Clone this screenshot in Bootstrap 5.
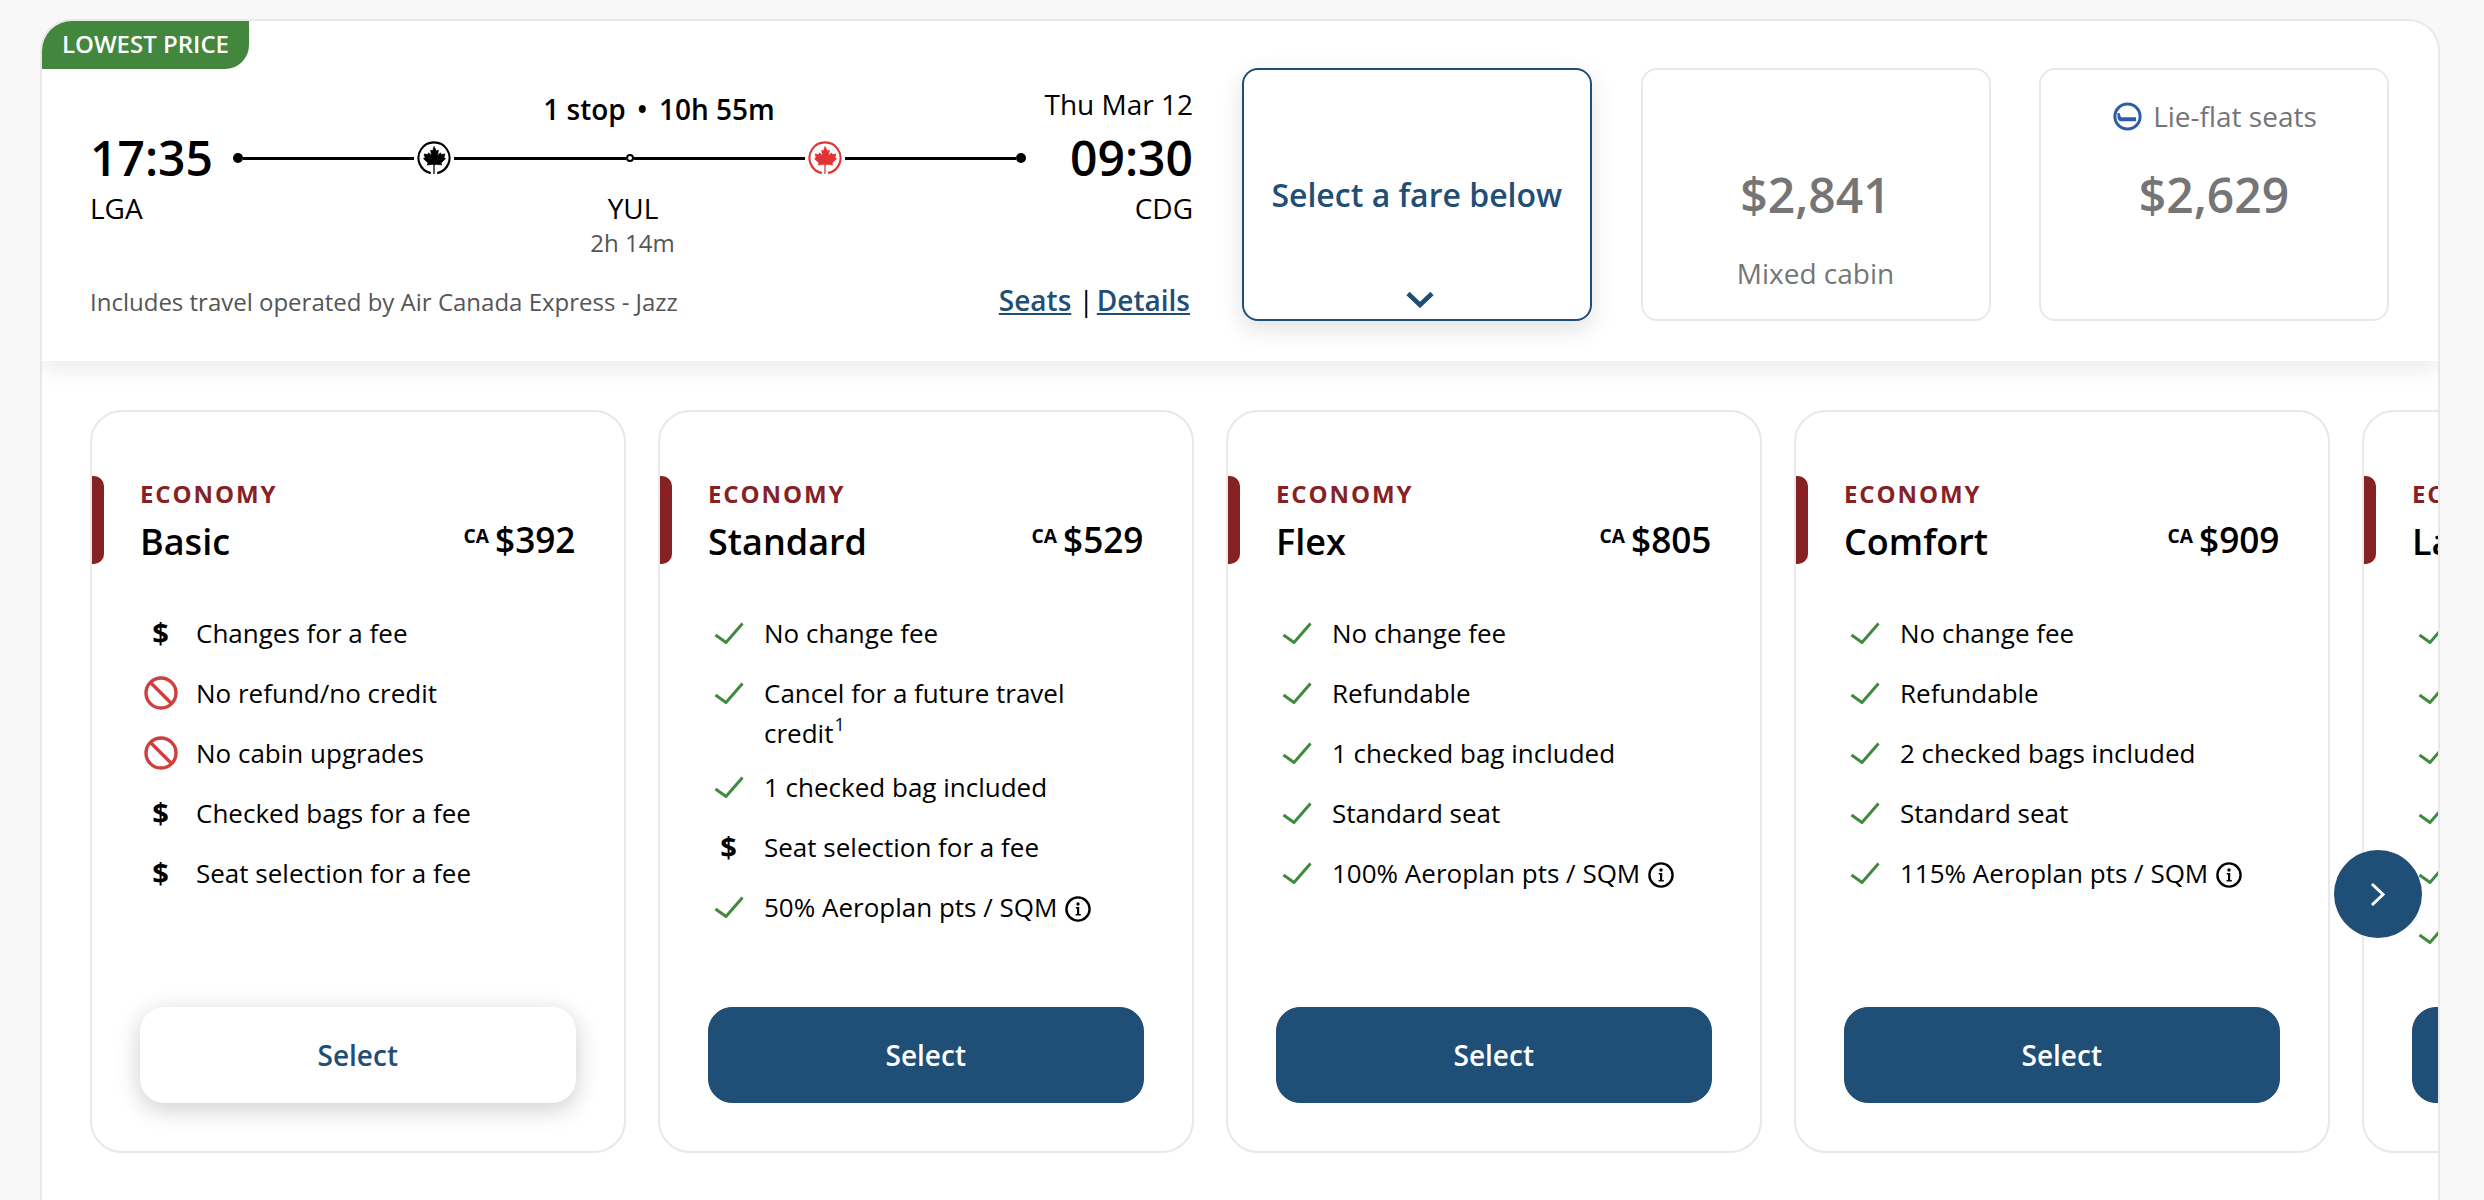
<!DOCTYPE html>
<html lang="en">
<head>
<meta charset="utf-8">
<title>Flight fares</title>
<link href="https://cdn.jsdelivr.net/npm/bootstrap@5.3.0/dist/css/bootstrap.min.css" rel="stylesheet">
<style>
html,body{height:100%;overflow:hidden}
body{background:#f8f8f8;font-family:"Open Sans","Liberation Sans",sans-serif;font-size:26px;line-height:34px;color:#000}
.shell{margin:19px 44px 0 40px;height:1181px;background:#fff;border:2px solid #e8e8e8;border-bottom:0;border-radius:32px 32px 0 0;overflow:hidden}
.head-band{height:340px;padding:47px 49px 0 48px;background:#fff;gap:48.5px;z-index:1;box-shadow:0 10px 20px rgba(0,0,0,.07)}
.deal-tag{background:#43873e;color:#fff;font-size:24px;line-height:46px;height:48px;padding:0 20px;font-weight:600;border-radius:0 0 24px 0}
.trip{width:1103px;padding-top:18.500px;font-size:28px}
.trip-grid{display:grid;grid-template-columns:143px 793px 167px}
.stop-line{font-weight:600;text-align:center;padding:5px 0 0 59px}
.stop-dot{margin:0 4px}
.clock{font-size:48px;line-height:64px;font-weight:600;margin-top:.5px}
.track{margin-top:.5px}
.pip{width:10px;height:10px;border-radius:50%;background:#000;flex:none}
.pip-open{width:8px;height:8px;background:#fff;border:2px solid #000}
.wire{flex:1;height:3px;background:#000}
.rondel{width:34px;height:34px;margin:0 3px;flex:none;stroke-width:.7}
.codes{margin-top:1px}
.stop-code{padding-left:7px}
.muted-note{font-size:24px;color:#555;line-height:30px;margin-top:1px}
.layover{margin-top:3px;padding-left:6px}
.trip-foot{margin-top:25px;padding-right:3px}
.trip-foot a{color:#1f4e76;font-weight:600}
.bar-sep{margin-right:-4.5px}
.tile{width:350px;height:253px;border:2px solid #e8e8e8;border-radius:16px;display:grid;grid-template-rows:1fr auto 1fr;text-align:center;color:#757575;flex:none;font-size:28px}
.tile-on{width:350.5px;border-color:#1f4e76;color:#1f4e76;box-shadow:0 8px 24px rgba(0,0,0,.12)}
.tile-on .call{font-size:32px;font-weight:600;line-height:64px}
.amount{font-size:48px;font-weight:600;line-height:64px}
.chev{width:28px;height:17px;align-self:end;justify-self:center;margin:0 0 11px 6px}
.sleeper-gap{gap:11px;padding-left:2px}
.rail{padding:49px 0 0 48px;gap:32.500px;overflow:hidden}
.fare{width:535.500px;height:743px;flex:none;border:2px solid #e8e8e8;border-radius:32px;padding:67px 48px 48px;background:#fff}
.fare-tab{width:12px;height:88px;background:#862224;border-radius:0 10px 10px 0;left:0;top:64px}
.tier{font-size:24px;font-weight:700;letter-spacing:1.9px;line-height:30px;color:#862224}
.fare-name{font-size:36px;line-height:44px;font-weight:600;margin-top:11px}
.fare-cost{font-size:35.2px;line-height:40px;font-weight:600;white-space:nowrap;margin-top:10px}
.fare-cost sup{font-size:19.2px;font-weight:700;vertical-align:10px;top:0;margin-right:6px;line-height:0}
.perks{margin:51.500px 0 0;padding:0}
.perks li{display:flex;gap:15px;margin-bottom:26px}
.mark-slot{width:41px;height:34px;flex:none;display:flex;align-items:center;justify-content:center;font-size:29px;font-weight:700}
.perks sup{font-size:18px;top:-.65em;margin-left:1px}
.two-line{line-height:40px;margin:-3px 0 -9px}
.tip-i{width:26px;height:26px;margin-left:8px;vertical-align:-5px}
.pick{height:96px;border-radius:24px;font-size:28px;font-weight:600;--bs-btn-bg:#1f4e76;--bs-btn-border-color:#1f4e76;--bs-btn-color:#fff;--bs-btn-hover-bg:#1f4e76;--bs-btn-hover-color:#fff;display:flex;align-items:center;justify-content:center}
.pick-soft{--bs-btn-bg:#fff;--bs-btn-border-color:#fff;--bs-btn-color:#1f4e76;--bs-btn-hover-bg:#fff;--bs-btn-hover-color:#1f4e76;box-shadow:0 6px 24px rgba(0,0,0,.2)}
.next-btn{width:88px;height:88px;border-radius:50%;background:#1f4e76;border:0;left:2292px;top:489px}
</style>
</head>
<body>
<svg width="0" height="0" class="d-block position-absolute">
  <symbol id="ok" viewBox="0 0 30 22"><polyline points="1.5,13 12,20.5 28.5,1.5" fill="none" stroke="#3f8a3f" stroke-width="3"/></symbol>
  <symbol id="ban" viewBox="0 0 34 34"><circle cx="17" cy="17" r="15" fill="none" stroke="#cf3f3f" stroke-width="3.4"/><line x1="6.5" y1="6.5" x2="27.5" y2="27.5" stroke="#cf3f3f" stroke-width="3.4"/></symbol>
  <symbol id="info" viewBox="0 0 26 26"><circle cx="13" cy="13" r="11.6" fill="none" stroke="#000" stroke-width="2.4"/><circle cx="13" cy="8" r="1.7"/><path d="M10.8 11h3.4v7h1.6v1.6H10.6V18h1.4v-5.4h-1.2z"/></symbol>
  <symbol id="leaf" viewBox="0 0 32 32"><path d="M16 5.2l2.3 4.3 1.8-.9-.7 5.3 2.7-2.8.8 1.700 3.400-.6-1 3.600 1.600.8-4.300 4 .6 1.900-5.900-.7v.6h-1.600v-.6l-5.900.7.6-1.900-4.300-4 1.600-.8-1-3.600 3.400.6.8-1.700 2.700 2.800-.7-5.300 1.800.9z"/><rect x="15.4" y="22" width="1.2" height="9" stroke="none"/></symbol>
</svg>
<main class="shell">
  <section class="head-band d-flex position-relative">
    <span class="deal-tag position-absolute top-0 start-0">LOWEST PRICE</span>
    <div class="trip">
      <div class="trip-grid">
        <div></div>
        <div class="stop-line">1 stop <span class="stop-dot">•</span> 10h 55m</div>
        <div class="text-end">Thu Mar 12</div>
        <div class="clock">17:35</div>
        <div class="track d-flex align-items-center">
          <span class="pip"></span><span class="wire"></span>
          <svg class="rondel" viewBox="0 0 32 32" stroke="#000"><path d="M13 30.2A14.6 14.6 0 1 1 19 30.2" fill="none" stroke-width="2"/><use href="#leaf"/></svg>
          <span class="wire"></span><span class="pip pip-open"></span><span class="wire"></span>
          <svg class="rondel" viewBox="0 0 32 32" fill="#e03434" stroke="#e03434"><path d="M13 30.2A14.6 14.6 0 1 1 19 30.2" fill="none" stroke-width="2"/><use href="#leaf"/></svg>
          <span class="wire"></span><span class="pip"></span>
        </div>
        <div class="clock text-end">09:30</div>
        <div class="codes">LGA</div>
        <div class="codes stop-code text-center">YUL</div>
        <div class="codes text-end">CDG</div>
        <div></div>
        <div class="muted-note layover text-center">2h 14m</div>
        <div></div>
      </div>
      <div class="trip-foot d-flex justify-content-between align-items-baseline">
        <span class="muted-note">Includes travel operated by Air Canada Express - Jazz</span>
        <span><a href="#">Seats</a> <span class="bar-sep">|</span> <a href="#">Details</a></span>
      </div>
    </div>
    <div class="tile tile-on">
      <div></div>
      <div class="call">Select a fare below</div>
      <svg class="chev" viewBox="0 0 28 17"><polyline points="2,2.5 14,14 26,2.5" fill="none" stroke="#1f4e76" stroke-width="4.6"/></svg>
    </div>
    <div class="tile">
      <div></div>
      <div class="amount">$2,841</div>
      <div class="d-flex align-items-center justify-content-center">Mixed cabin</div>
    </div>
    <div class="tile">
      <div class="d-flex align-items-center justify-content-center sleeper-gap">
        <svg width="29" height="29" viewBox="0 0 29 29"><circle cx="14.500" cy="14.500" r="12.600" fill="none" stroke="#2a5fa8" stroke-width="3"/><path d="M4.500 11h2l1.500 4.300h15v4H8c-2 0-3.500-2-3.500-4z" fill="#2a5fa8"/></svg>
        <span>Lie-flat seats</span>
      </div>
      <div class="amount">$2,629</div>
      <div></div>
    </div>
  </section>
  <section class="rail d-flex position-relative">
    <article class="fare d-flex flex-column position-relative">
      <span class="fare-tab position-absolute"></span>
      <div class="tier">ECONOMY</div>
      <div class="d-flex justify-content-between align-items-start">
        <div class="fare-name">Basic</div>
        <div class="fare-cost"><sup>CA</sup>$392</div>
      </div>
      <ul class="perks list-unstyled">
        <li><span class="mark-slot">$</span><span>Changes for a fee</span></li>
        <li><span class="mark-slot"><svg width="34" height="34"><use href="#ban"/></svg></span><span>No refund/no credit</span></li>
        <li><span class="mark-slot"><svg width="34" height="34"><use href="#ban"/></svg></span><span>No cabin upgrades</span></li>
        <li><span class="mark-slot">$</span><span>Checked bags for a fee</span></li>
        <li><span class="mark-slot">$</span><span>Seat selection for a fee</span></li>
      </ul>
      <a href="#" class="btn pick pick-soft mt-auto">Select</a>
    </article>
    <article class="fare d-flex flex-column position-relative">
      <span class="fare-tab position-absolute"></span>
      <div class="tier">ECONOMY</div>
      <div class="d-flex justify-content-between align-items-start">
        <div class="fare-name">Standard</div>
        <div class="fare-cost"><sup>CA</sup>$529</div>
      </div>
      <ul class="perks list-unstyled">
        <li><span class="mark-slot"><svg width="30" height="22"><use href="#ok"/></svg></span><span>No change fee</span></li>
        <li><span class="mark-slot"><svg width="30" height="22"><use href="#ok"/></svg></span><span class="two-line">Cancel for a future travel credit<sup>1</sup></span></li>
        <li><span class="mark-slot"><svg width="30" height="22"><use href="#ok"/></svg></span><span>1 checked bag included</span></li>
        <li><span class="mark-slot">$</span><span>Seat selection for a fee</span></li>
        <li><span class="mark-slot"><svg width="30" height="22"><use href="#ok"/></svg></span><span>50% Aeroplan pts / SQM<svg class="tip-i"><use href="#info"/></svg></span></li>
      </ul>
      <a href="#" class="btn pick mt-auto">Select</a>
    </article>
    <article class="fare d-flex flex-column position-relative">
      <span class="fare-tab position-absolute"></span>
      <div class="tier">ECONOMY</div>
      <div class="d-flex justify-content-between align-items-start">
        <div class="fare-name">Flex</div>
        <div class="fare-cost"><sup>CA</sup>$805</div>
      </div>
      <ul class="perks list-unstyled">
        <li><span class="mark-slot"><svg width="30" height="22"><use href="#ok"/></svg></span><span>No change fee</span></li>
        <li><span class="mark-slot"><svg width="30" height="22"><use href="#ok"/></svg></span><span>Refundable</span></li>
        <li><span class="mark-slot"><svg width="30" height="22"><use href="#ok"/></svg></span><span>1 checked bag included</span></li>
        <li><span class="mark-slot"><svg width="30" height="22"><use href="#ok"/></svg></span><span>Standard seat</span></li>
        <li><span class="mark-slot"><svg width="30" height="22"><use href="#ok"/></svg></span><span>100% Aeroplan pts / SQM<svg class="tip-i"><use href="#info"/></svg></span></li>
      </ul>
      <a href="#" class="btn pick mt-auto">Select</a>
    </article>
    <article class="fare d-flex flex-column position-relative">
      <span class="fare-tab position-absolute"></span>
      <div class="tier">ECONOMY</div>
      <div class="d-flex justify-content-between align-items-start">
        <div class="fare-name">Comfort</div>
        <div class="fare-cost"><sup>CA</sup>$909</div>
      </div>
      <ul class="perks list-unstyled">
        <li><span class="mark-slot"><svg width="30" height="22"><use href="#ok"/></svg></span><span>No change fee</span></li>
        <li><span class="mark-slot"><svg width="30" height="22"><use href="#ok"/></svg></span><span>Refundable</span></li>
        <li><span class="mark-slot"><svg width="30" height="22"><use href="#ok"/></svg></span><span>2 checked bags included</span></li>
        <li><span class="mark-slot"><svg width="30" height="22"><use href="#ok"/></svg></span><span>Standard seat</span></li>
        <li><span class="mark-slot"><svg width="30" height="22"><use href="#ok"/></svg></span><span>115% Aeroplan pts / SQM<svg class="tip-i"><use href="#info"/></svg></span></li>
      </ul>
      <a href="#" class="btn pick mt-auto">Select</a>
    </article>
    <article class="fare d-flex flex-column position-relative">
      <span class="fare-tab position-absolute"></span>
      <div class="tier">ECONOMY</div>
      <div class="fare-name">Latitude</div>
      <ul class="perks list-unstyled">
        <li><span class="mark-slot"><svg width="30" height="22"><use href="#ok"/></svg></span></li>
        <li><span class="mark-slot"><svg width="30" height="22"><use href="#ok"/></svg></span></li>
        <li><span class="mark-slot"><svg width="30" height="22"><use href="#ok"/></svg></span></li>
        <li><span class="mark-slot"><svg width="30" height="22"><use href="#ok"/></svg></span></li>
        <li><span class="mark-slot"><svg width="30" height="22"><use href="#ok"/></svg></span></li>
        <li><span class="mark-slot"><svg width="30" height="22"><use href="#ok"/></svg></span></li>
      </ul>
      <a href="#" class="btn pick mt-auto">Select</a>
    </article>
    <button type="button" class="next-btn position-absolute d-flex align-items-center justify-content-center" aria-label="Next fares">
      <svg width="16" height="25" viewBox="0 0 16 25"><polyline points="2,2 13,12.500 2,23" fill="none" stroke="#fff" stroke-width="3"/></svg>
    </button>
  </section>
</main>
<script src="https://cdn.jsdelivr.net/npm/bootstrap@5.3.0/dist/js/bootstrap.bundle.min.js"></script>
</body>
</html>
